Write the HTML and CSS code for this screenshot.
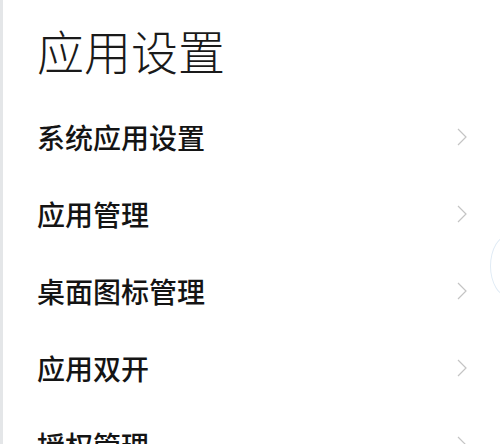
FILE: index.html
```html
<!DOCTYPE html>
<html lang="zh-CN">
<head>
<meta charset="utf-8">
<link rel="stylesheet" href="styles.css">
</head>
<body>
<div class="screen">
  <h1 class="title">应用设置</h1>
  <ul class="list">
    <li class="row"><span class="label">系统应用设置</span><svg class="chev" viewBox="0 0 10 18"><path d="M1 1 L9 9 L1 17"/></svg></li>
    <li class="row"><span class="label">应用管理</span><svg class="chev" viewBox="0 0 10 18"><path d="M1 1 L9 9 L1 17"/></svg></li>
    <li class="row"><span class="label">桌面图标管理</span><svg class="chev" viewBox="0 0 10 18"><path d="M1 1 L9 9 L1 17"/></svg></li>
    <li class="row"><span class="label">应用双开</span><svg class="chev" viewBox="0 0 10 18"><path d="M1 1 L9 9 L1 17"/></svg></li>
    <li class="row"><span class="label">授权管理</span><svg class="chev" viewBox="0 0 10 18"><path d="M1 1 L9 9 L1 17"/></svg></li>
  </ul>
  <div class="edge-arc"></div>
</div>
</body>
</html>
```
FILE: styles.css
```css
html, body {
  margin: 0;
  padding: 0;
  background: #ffffff;
}
.screen {
  position: relative;
  width: 500px;
  height: 444px;
  overflow: hidden;
  box-sizing: border-box;
  border-left: 3px solid #e4e6e8;
  padding-left: 34px;
  font-family: "Noto Sans CJK SC", "Noto Sans", sans-serif;
  color: #141414;
}
.title {
  margin: 0;
  padding-top: 22px;
  font-size: 47px;
  line-height: 56px;
  font-weight: 300;
  letter-spacing: 0;
  color: #1a1a1a;
}
.list {
  list-style: none;
  margin: 0;
  padding: 0;
  padding-top: 20px;
}
.row {
  display: flex;
  align-items: center;
  justify-content: space-between;
  height: 77px;
  padding-right: 33px;
}
.label {
  font-size: 28px;
  line-height: 30px;
  font-weight: 500;
}
.chev {
  width: 10px;
  height: 18px;
  fill: none;
  stroke: #c4c4c4;
  stroke-width: 1.2;
}
.edge-arc {
  position: absolute;
  right: -28px;
  top: 235px;
  width: 36px;
  height: 60px;
  border-radius: 50%;
  border: 1px solid #e0ebf5;
}
```
